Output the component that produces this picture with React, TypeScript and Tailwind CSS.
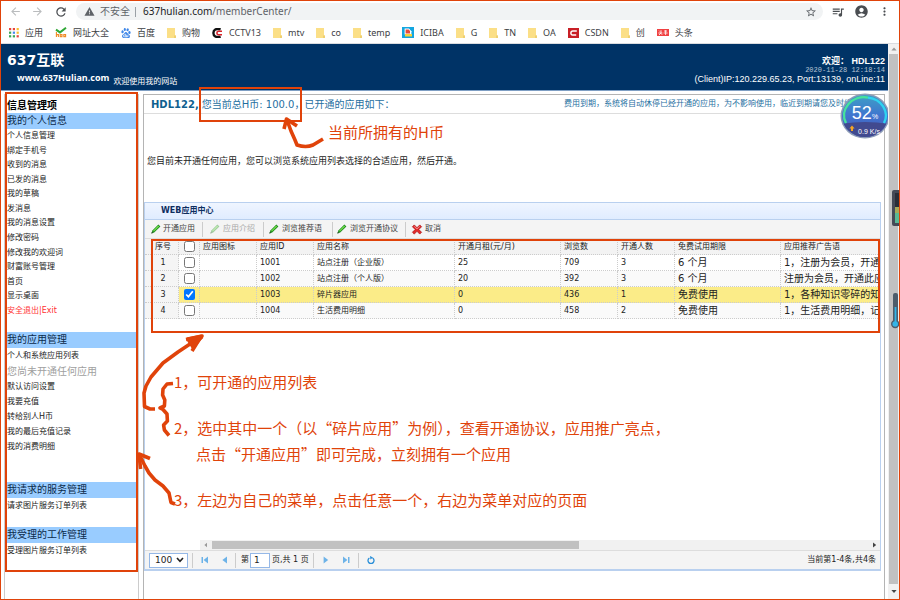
import clsx from 'clsx';
import React, { useState } from 'react';
import {
    MdAccountCircle,
    MdArrowBack,
    MdArrowForward,
    MdMoreVert,
    MdQueueMusic,
    MdRefresh,
    MdStarBorder,
    MdWarning
} from 'react-icons/md';
import { SiBaidu } from 'react-icons/si';

interface AppRow {
    id: string;
    name: string;
    rent: string;
    views: string;
    users: string;
    trial: string;
    slogan: string;
}

const ROWS: AppRow[] = [
    {
        id: '1001',
        name: '站点注册（企业版）',
        rent: '25',
        views: '709',
        users: '3',
        trial: '6 个月',
        slogan: '1，注册为会员，开通'
    },
    {
        id: '1002',
        name: '站点注册（个人版）',
        rent: '20',
        views: '392',
        users: '3',
        trial: '6 个月',
        slogan: '注册为会员，开通此应'
    },
    {
        id: '1003',
        name: '碎片器应用',
        rent: '0',
        views: '436',
        users: '1',
        trial: '免费使用',
        slogan: '1，各种知识零碎的知'
    },
    {
        id: '1004',
        name: '生活费用明细',
        rent: '0',
        views: '458',
        users: '2',
        trial: '免费使用',
        slogan: '1，生活费用明细，记'
    }
];

const PERSONAL = [
    '个人信息管理',
    '绑定手机号',
    '收到的消息',
    '已发的消息',
    '我的草稿',
    '发消息',
    '我的消息设置',
    '修改密码',
    '修改我的欢迎词',
    '财富账号管理',
    '首页',
    '显示桌面'
];

const APP_MENU = [
    '默认访问设置',
    '我要充值',
    '转给别人H币',
    '我的最后充值记录',
    '我的消费明细'
];

const AppsIcon = () => (
    <svg viewBox="0 0 10 10" className="h-[10px] w-[10px]">
        {['#e8453c', '#e8453c', '#f9bb2d', '#3aa757', '#4688f1', '#f9bb2d', '#3aa757', '#3aa757', '#e8453c'].map(
            (fill, i) => (
                <rect
                    key={i}
                    x={(i % 3) * 3.8}
                    y={Math.floor(i / 3) * 3.6}
                    width="2.2"
                    height="2.2"
                    fill={fill}
                />
            )
        )}
    </svg>
);

const HaoIcon = () => (
    <svg viewBox="0 0 12 11" className="h-[11px] w-[12px]" fill="none">
        <path d="M1 2.6 L5 5.4 L11 0.8" stroke="#2fa836" strokeWidth="2" />
        <path
            d="M1.4 5 V10 M1.4 7.6 H3.4 V10 M5.2 7.6 H7 V9.6 H5.2 Z M8.8 7.6 H10.6 V9.6 H8.8 Z"
            stroke="#f08a24"
            strokeWidth="1.1"
        />
    </svg>
);

const FolderIcon = () => (
    <svg viewBox="0 0 9 10" className="h-[10px] w-[9px]">
        <path d="M0 0 H8 V7 L9 8 V10 H0 Z" fill="#fbdf87" />
        <path d="M7 7.6 H9 V10 H7 Z" fill="#efd070" />
    </svg>
);

const CctvIcon = () => (
    <svg viewBox="0 0 11 10" className="h-[10px] w-[11px]" fill="none">
        <path d="M8.6 1.4 C4 0 1.4 2 1.4 5 C1.4 8 4 10 8.6 8.6" stroke="#111" strokeWidth="2.4" />
        <path d="M10 3.2 H6.4 C4.4 3.6 4.4 6.4 6.4 6.8 H10" stroke="#d8232a" strokeWidth="1.6" />
    </svg>
);

const IcibaIcon = () => (
    <svg viewBox="0 0 12 11" className="h-[11px] w-[12px]">
        <rect width="12" height="11" fill="#14a6e0" />
        <path d="M2.6 1.4 H7 L9.4 4.2 V7.4 H2.6 Z" fill="#fff" />
        <path d="M3.6 2.4 H6.6 L8 4 V6.4 H3.6 Z" fill="#e84b3c" />
        <path d="M3 7 H10 V9.5 H3 Z" fill="#f9d23c" />
    </svg>
);

const CsdnIcon = () => (
    <svg viewBox="0 0 11 10" className="h-[10px] w-[11px]" fill="none">
        <rect width="11" height="10" fill="#c81f26" />
        <path d="M8.8 3 H4.8 C2.4 3 2.2 7 4.6 7 H8.2" stroke="#fff" strokeWidth="1.5" />
    </svg>
);

const ToutiaoIcon = () => (
    <svg viewBox="0 0 12 7" className="h-[7px] w-[12px]">
        <rect width="12" height="7" fill="#f04142" />
        <path
            d="M1.4 4 H5.4 M2 1.6 L3 2.6 M4 1.2 V4 L2 6 M4 4.4 L5.2 5.8 M7 2 H10 M6.6 4 H10.6 M8.6 1.2 V6"
            stroke="#fff"
            strokeWidth="0.8"
            fill="none"
        />
    </svg>
);

const PencilIcon = ({ faded }: { faded?: boolean }) => (
    <svg viewBox="0 0 10 10" className={clsx('h-[10px] w-[10px]', faded && 'opacity-40')}>
        <path d="M7.4 0.6 L9.4 2.6 L3.2 8.6 L0.4 9.6 L1.4 6.6 Z" fill="#1f8a1f" />
        <path d="M7.2 1.6 L8.2 2.6 L3 7.6 L2 6.8 Z" fill="#6fdc4a" />
        <path d="M0.4 9.6 L0.8 8 L2 9.1 Z" fill="#333" />
    </svg>
);

const CancelIcon = () => (
    <svg viewBox="0 0 12 12" className="h-[11px] w-[12px]">
        <path
            d="M1 3 L3 1 L6 4 L9 1 L11 3 L8 6 L11 9 L9 11 L6 8 L3 11 L1 9 L4 6 Z"
            fill="#e22b2b"
            stroke="#a81212"
            strokeWidth="0.8"
        />
        <path d="M3 2.6 L6 5.4 L9 2.6" stroke="#ff9b9b" strokeWidth="0.8" fill="none" />
    </svg>
);

const BOOKMARKS = [
    { label: '应用', icon: <AppsIcon /> },
    { label: '网址大全', icon: <HaoIcon /> },
    { label: '百度', icon: <SiBaidu className="h-[10px] w-[10px] text-[#3d86e8]" /> },
    { label: '购物', icon: <FolderIcon /> },
    { label: 'CCTV13', icon: <CctvIcon /> },
    { label: 'mtv', icon: <FolderIcon /> },
    { label: 'co', icon: <FolderIcon /> },
    { label: 'temp', icon: <FolderIcon /> },
    { label: 'ICIBA', icon: <IcibaIcon /> },
    { label: 'G', icon: <FolderIcon /> },
    { label: 'TN', icon: <FolderIcon /> },
    { label: 'OA', icon: <FolderIcon /> },
    { label: 'CSDN', icon: <CsdnIcon /> },
    { label: '创', icon: <FolderIcon /> },
    { label: '头条', icon: <ToutiaoIcon /> }
];

const BrowserBar = () => (
    <div className="border-b border-[#dadce0] bg-white font-['Noto_Sans','Noto_Sans_CJK_SC',sans-serif]">
        <div className="flex h-[21px] items-center pr-2 pl-2">
            <button aria-label="后退" className="w-[22px] text-[#babcbe]">
                <MdArrowBack className="h-[13px] w-[13px]" />
            </button>
            <button aria-label="前进" className="w-[23px] text-[#babcbe]">
                <MdArrowForward className="h-[13px] w-[13px]" />
            </button>
            <button aria-label="刷新" className="w-[22px] text-[#4a4d51]">
                <MdRefresh className="h-[14px] w-[14px]" />
            </button>
            <div className="flex h-[17px] flex-1 items-center rounded-full bg-[#f1f3f4] pr-[6px] pl-2 text-[10px] text-[#5f6368]">
                <MdWarning className="h-[11px] w-[11px]" />
                <span className="ml-[5px]">不安全</span>
                <span className="mr-[7px] ml-[5px] h-[10px] w-px bg-[#9aa0a6]" />
                <span className="flex-1">
                    <span className="text-[#202124]">637hulian.com</span>
                    /memberCenter/
                </span>
                <button aria-label="收藏">
                    <MdStarBorder className="h-[12px] w-[12px]" />
                </button>
            </div>
            <div className="flex items-center gap-[9px] pl-2 text-[#4a4d51]">
                <MdQueueMusic className="h-[14px] w-[14px]" />
                <MdAccountCircle className="h-[15px] w-[15px]" />
                <MdMoreVert className="h-[13px] w-[13px]" />
            </div>
        </div>
        <nav className="flex h-[21px] items-center gap-3 overflow-hidden pl-2 text-[9px] text-[#3c4043]">
            {BOOKMARKS.map((b) => (
                <a key={b.label} href="#" className="flex shrink-0 items-center gap-[6px]">
                    {b.icon}
                    {b.label}
                </a>
            ))}
        </nav>
    </div>
);

const SiteHeader = () => (
    <header className="flex h-[47px] justify-between border-b border-[#7f9fc4] bg-[#003366] pr-[3px] pl-[6px] text-white">
        <div className="flex flex-col pt-[6px]">
            <h1 className="text-[14px] leading-5 font-bold">637互联</h1>
            <div className="flex items-start gap-1 pl-[10px]">
                <span className="font-['Open_Sans',sans-serif] text-[9px] leading-4 font-bold">
                    www.637Hulian.com
                </span>
                <span className="pt-1 text-[8px] leading-4">欢迎使用我的网站</span>
            </div>
        </div>
        <div className="pt-[13px] text-right font-['Liberation_Sans','Noto_Sans_CJK_SC',sans-serif] text-[9px] leading-[9px]">
            <p className="font-bold">欢迎： HDL122</p>
            <p className="font-['Liberation_Mono',monospace] text-[7px] text-[#b8c4d4]">
                2020-11-28 12:18:14
            </p>
            <p>(Client)IP:120.229.65.23, Port:13139, onLine:11</p>
        </div>
    </header>
);

const MenuTitle = ({ children }: { children: React.ReactNode }) => (
    <h2 className="bg-[#99ccff] pl-[2px] text-[10px] leading-4 text-[#0b2a4a]">{children}</h2>
);

const MenuLink = ({ children }: { children: React.ReactNode }) => (
    <a href="#" className="flex h-full items-center pl-[2px] leading-[14px]">
        {children}
    </a>
);

const Sidebar = () => (
    <aside className="relative ml-[3px] flex w-[135px] shrink-0 flex-col border-x border-[#cccccc] bg-white pt-1 text-[8px] text-[#222222]">
        <p className="pl-[2px] text-[10px] leading-[15px] font-bold text-black">信息管理项</p>
        <MenuTitle>我的个人信息</MenuTitle>
        <ul className="grid h-[189px] auto-rows-fr">
            {PERSONAL.map((item) => (
                <li key={item}>
                    <MenuLink>{item}</MenuLink>
                </li>
            ))}
            <li className="text-[#ff3333]">
                <MenuLink>安全退出|Exit</MenuLink>
            </li>
        </ul>
        <div className="mt-[14px]">
            <MenuTitle>我的应用管理</MenuTitle>
            <div className="h-4">
                <MenuLink>个人和系统应用列表</MenuLink>
            </div>
            <p className="pl-[2px] text-[10px] leading-4 text-[#a0a0a0]">您尚未开通任何应用</p>
            <ul className="grid h-[74px] auto-rows-fr">
                {APP_MENU.map((item) => (
                    <li key={item}>
                        <MenuLink>{item}</MenuLink>
                    </li>
                ))}
            </ul>
        </div>
        <div className="mt-7">
            <MenuTitle>我请求的服务管理</MenuTitle>
            <div className="h-4">
                <MenuLink>请求图片服务订单列表</MenuLink>
            </div>
        </div>
        <div className="mt-[13px]">
            <MenuTitle>我受理的工作管理</MenuTitle>
            <div className="h-4">
                <MenuLink>受理图片服务订单列表</MenuLink>
            </div>
        </div>
        <div className="absolute -top-[2px] right-0 bottom-[27px] left-0 border-2 border-[#e0430a]" />
    </aside>
);

const Separator = () => <span className="h-[15px] w-px bg-[#cccccc]" />;

const Toolbar = () => (
    <div className="flex h-[19px] items-center border-b border-[#dddddd] bg-[#f4f4f4] pl-[6px] text-[8px] text-[#444444]">
        <button className="flex w-[51px] items-center gap-[2px]">
            <PencilIcon />
            开通应用
        </button>
        <Separator />
        <button disabled className="ml-[7px] flex w-[53px] items-center gap-[3px] text-[#a8a8a8]">
            <PencilIcon faded />
            应用介绍
        </button>
        <Separator />
        <button className="ml-[5px] flex w-[63px] items-center gap-[3px]">
            <PencilIcon />
            浏览推荐语
        </button>
        <Separator />
        <button className="ml-1 flex w-[68px] items-center gap-[3px]">
            <PencilIcon />
            浏览开通协议
        </button>
        <Separator />
        <button className="ml-[5px] flex items-center gap-[2px]">
            <CancelIcon />
            取消
        </button>
    </div>
);

const CELL =
    'h-4 overflow-hidden border-r border-b border-dotted border-[#cccccc] pl-[3px] font-normal whitespace-nowrap';

const AppTable = () => {
    const [checked, setChecked] = useState<string[]>(['1003']);

    const toggle = (id: string) => {
        setChecked((prev) =>
            prev.includes(id) ? prev.filter((c) => c !== id) : [...prev, id]
        );
    };

    return (
        <table className="w-full table-fixed border-separate border-spacing-0 text-left text-[8px] leading-[15px] text-[#222222]">
            <colgroup>
                <col className="w-[34px]" />
                <col className="w-[21px]" />
                <col className="w-[57px]" />
                <col className="w-[57px]" />
                <col className="w-[141px]" />
                <col className="w-[106px]" />
                <col className="w-[57px]" />
                <col className="w-[57px]" />
                <col className="w-[106px]" />
                <col />
            </colgroup>
            <thead className="bg-[#f3f3f3]">
                <tr>
                    <th className={clsx(CELL, 'text-center')}>序号</th>
                    <th className={CELL}>
                        <input
                            type="checkbox"
                            aria-label="全选"
                            className="ml-[2px] block h-[11px] w-[11px]"
                            checked={checked.length === ROWS.length}
                            onChange={(e) => {
                                setChecked(e.target.checked ? ROWS.map((r) => r.id) : []);
                            }}
                        />
                    </th>
                    <th className={CELL}>应用图标</th>
                    <th className={CELL}>应用ID</th>
                    <th className={CELL}>应用名称</th>
                    <th className={CELL}>开通月租(元/月)</th>
                    <th className={CELL}>浏览数</th>
                    <th className={CELL}>开通人数</th>
                    <th className={CELL}>免费试用期限</th>
                    <th className={CELL}>应用推荐广告语</th>
                </tr>
            </thead>
            <tbody>
                {ROWS.map((row, i) => (
                    <tr
                        key={row.id}
                        className={clsx(
                            checked.includes(row.id) && 'bg-[#fbec88]',
                            !checked.includes(row.id) && i % 2 === 1 && 'bg-[#fafafa]'
                        )}
                    >
                        <td className={clsx(CELL, 'bg-[#f5f5f5] text-center')}>{i + 1}</td>
                        <td className={CELL}>
                            <input
                                type="checkbox"
                                aria-label={row.name}
                                className="ml-[2px] block h-[11px] w-[11px]"
                                checked={checked.includes(row.id)}
                                onChange={() => {
                                    toggle(row.id);
                                }}
                            />
                        </td>
                        <td className={CELL} />
                        <td className={CELL}>{row.id}</td>
                        <td className={CELL}>{row.name}</td>
                        <td className={CELL}>{row.rent}</td>
                        <td className={CELL}>{row.views}</td>
                        <td className={CELL}>{row.users}</td>
                        <td className={clsx(CELL, 'text-[10px]')}>{row.trial}</td>
                        <td className={clsx(CELL, 'text-[10px]')}>{row.slogan}</td>
                    </tr>
                ))}
            </tbody>
        </table>
    );
};

const Pager = () => (
    <div className="flex h-[19px] items-center border-t border-[#dddddd] bg-[#f4f4f4] pr-1 pl-1 text-[8px] text-[#222222]">
        <div className="relative">
            <select
                aria-label="每页条数"
                className="block h-[15px] w-[39px] appearance-none border border-[#95b8e7] bg-white pl-[5px] text-[9px] leading-[13px]"
            >
                <option>100</option>
            </select>
            <svg
                viewBox="0 0 8 6"
                className="pointer-events-none absolute top-1 right-1 h-[6px] w-[8px]"
                fill="none"
            >
                <path d="M1 1 L4 4.4 L7 1" stroke="#222" strokeWidth="1.6" />
            </svg>
        </div>
        <div className="flex items-center gap-2 pl-1 text-[#6db3e8]">
            <Separator />
            <button aria-label="首页" className="w-3">
                <svg viewBox="0 0 8 8" className="h-[8px] w-[8px]" fill="currentColor">
                    <path d="M0.5 1 H2 V7 H0.5 Z M7 0.6 V7.4 L2.6 4 Z" />
                </svg>
            </button>
            <button aria-label="上一页" className="w-[6px]">
                <svg viewBox="0 0 8 8" className="h-[8px] w-[8px]" fill="currentColor">
                    <path d="M6 0.6 V7.4 L1.4 4 Z" />
                </svg>
            </button>
            <Separator />
        </div>
        <label className="flex items-center gap-px pl-[5px]">
            第
            <input
                defaultValue="1"
                className="h-[15px] w-5 border border-[#95b8e7] bg-white pl-[3px] text-[9px]"
            />
            <span className="pl-px">页,共 1 页</span>
        </label>
        <div className="flex items-center gap-2 pl-1 text-[#6db3e8]">
            <Separator />
            <button aria-label="下一页" className="w-3">
                <svg viewBox="0 0 8 8" className="h-[8px] w-[8px]" fill="currentColor">
                    <path d="M1.6 0.6 V7.4 L6.2 4 Z" />
                </svg>
            </button>
            <button aria-label="末页" className="w-[8px]">
                <svg viewBox="0 0 8 8" className="h-[8px] w-[8px]" fill="currentColor">
                    <path d="M6 1 H7.5 V7 H6 Z M1 0.6 V7.4 L5.4 4 Z" />
                </svg>
            </button>
            <Separator />
            <button aria-label="重新加载">
                <svg viewBox="0 0 8 8" className="h-[8px] w-[8px]" fill="none">
                    <path d="M2.4 2 A3 3 0 1 0 5.6 2" stroke="#2a8fd8" strokeWidth="1.3" />
                    <path d="M3 0 L6 1.6 L3.4 3.4 Z" fill="#2a8fd8" />
                </svg>
            </button>
        </div>
        <span className="ml-auto">当前第1-4条,共4条</span>
    </div>
);

const AppCenter = () => (
    <section className="relative mr-[3px] mb-7 flex flex-1 flex-col border border-b-2 border-[#b9d0ef] bg-white">
        <h2 className="h-[17px] border-b border-[#b9d0ef] bg-gradient-to-b from-[#eff5ff] to-[#e0ecff] pl-4 text-[8px] leading-4 font-bold text-[#0e2d5f]">
            WEB应用中心
        </h2>
        <Toolbar />
        <AppTable />
        <div className="mt-auto ml-[55px] flex h-[10px] items-center bg-[#f1f1f1]">
            <svg viewBox="0 0 12 8" className="h-[8px] w-[12px]">
                <path d="M7 1.8 V6.2 L4.4 4 Z" fill="#999" />
            </svg>
            <div className="h-2 w-[54%] bg-[#c1c1c1]" />
            <svg viewBox="0 0 12 8" className="ml-auto h-[8px] w-[12px]">
                <path d="M5 1.4 V6.6 L8.2 4 Z" fill="#444" />
            </svg>
        </div>
        <Pager />
        <div className="absolute top-[36px] right-0 left-[6px] h-[94px] border-2 border-[#e0430a]" />
    </section>
);

const PageScrollbar = () => (
    <div className="relative flex w-[11px] shrink-0 flex-col items-center bg-[#f1f1f1]">
        <svg viewBox="0 0 10 10" className="h-[10px] w-[10px]">
            <path d="M2.4 6.4 L5 3.6 L7.6 6.4 Z" fill="#999" />
        </svg>
        <div className="w-[9px] flex-1 bg-[#c1c1c1]" />
        <svg viewBox="0 0 10 10" className="mb-px h-[14px] w-[10px]">
            <path d="M2.4 4 L5 7 L7.6 4 Z" fill="#444" />
        </svg>
        {/* desktop gauges docked to the window edge */}
        <svg viewBox="0 0 8 40" className="absolute top-[145px] right-0 h-[40px] w-[8px]">
            <rect x="1" y="1" width="9" height="36" rx="2" fill="#454a57" />
            <rect x="4" y="4" width="4" height="30" fill="#2a2e38" />
            <path d="M4 18 H8 V34 H4 Z" fill="#5bb894" />
            <path d="M4 18 H8 V24 H4 Z" fill="#a5a95a" />
        </svg>
        <svg viewBox="0 0 9 36" className="absolute top-[249px] right-0 h-[36px] w-[9px]">
            <rect x="3" y="0" width="5" height="30" rx="2" fill="#4d5d6b" />
            <circle cx="5.2" cy="31" r="4.2" fill="#4d5d6b" />
            <circle cx="5.2" cy="31" r="2.8" fill="#35b5e6" />
            <rect x="4.6" y="14" width="1.8" height="16" fill="#35b5e6" />
        </svg>
    </div>
);

const SpeedBall = () => (
    <div className="absolute -top-[2px] -right-[6px] flex h-[46px] w-[50px] flex-col items-center text-white">
        <svg viewBox="0 0 50 46" className="absolute inset-0 h-[46px] w-[50px]">
            <defs>
                <linearGradient id="ball" x1="0" y1="0" x2="0" y2="1">
                    <stop offset="0" stopColor="#3f9fc6" />
                    <stop offset="0.5" stopColor="#3f74cf" />
                    <stop offset="1" stopColor="#4a55b0" />
                </linearGradient>
                <clipPath id="ball-clip">
                    <ellipse cx="25" cy="23" rx="23" ry="21" />
                </clipPath>
            </defs>
            <ellipse cx="25" cy="23" rx="24.5" ry="22.5" fill="#8d9cb8" />
            <ellipse cx="25" cy="23" rx="23" ry="21" fill="url(#ball)" />
            <path d="M0 31 Q25 27 50 31 V46 H0 Z" fill="#414a8f" clipPath="url(#ball-clip)" />
            <path d="M6 30 A20 18 0 0 1 28 4.6" fill="none" stroke="#46e39c" strokeWidth="2.4" />
            <path d="M28 4.6 A20 18 0 0 1 44 30" fill="none" stroke="#2fd3f0" strokeWidth="2.4" />
            <path d="M11 38 V35.5 H9.4 L12 32.6 L14.6 35.5 H13 V38 Z" fill="#f5a623" />
        </svg>
        <span className="relative pt-[11px] font-['Liberation_Sans',sans-serif] text-[18px] leading-[18px]">
            52<span className="text-[7px]">%</span>
        </span>
        <span className="relative pt-[2px] pl-2 font-['Liberation_Sans',sans-serif] text-[7px] leading-[8px]">
            0.9 K/s
        </span>
    </div>
);

const MainPanel = () => (
    <main className="relative mr-[3px] ml-1 flex min-w-0 flex-1 flex-col border-x border-t border-[#b4b4b4] bg-white">
        <div className="flex h-[19px] items-center justify-between border-b border-[#dddddd] pl-[7px] text-[10px] text-[#1f6f9f]">
            <p className="whitespace-nowrap">
                <b className="mr-[3px] text-[#0f5f8f]">HDL122,</b>
                您当前总H币: 100.0，已开通的应用如下：
            </p>
            <p className="w-[320px] text-[8px] whitespace-nowrap">
                费用到期，系统将自动休停已经开通的应用，为不影响使用，临近到期请您及时续费
            </p>
        </div>
        <p className="h-[88px] pt-[39px] pl-[3px] text-[9px] leading-4 text-[#222222]">
            您目前未开通任何应用，您可以浏览系统应用列表选择的合适应用，然后开通。
        </p>
        <AppCenter />
        <SpeedBall />
    </main>
);

// Hand drawn guide: marker strokes and the notes that explain them
const Annotations = () => (
    <div className="pointer-events-none absolute inset-0 font-['Noto_Sans_CJK_SC',sans-serif] text-[15px] leading-[26px] whitespace-nowrap text-[#e0430a]">
        <div className="absolute top-[86px] left-[198px] h-[35px] w-[103px] border-2 border-[#e0430a]" />
        <svg
            viewBox="1 1 900 600"
            className="absolute top-0 left-0 h-[600px] w-[900px]"
            fill="none"
            stroke="#e0430a"
            strokeWidth="3.6"
            strokeLinejoin="round"
        >
            <path d="M287 120 L291 131 L295 140 L297 145 Q306 148 313 145 L323 139" />
            <path d="M284 129 L286.5 119 L297 126" />
            <path d="M155 409 L150 409 L144.5 406.5 L144 393 L146 386 L151 377 L163 363 L178 352 L190 344 L202 337" />
            <path d="M186 339.5 L201 336.5 L192 351" />
            <path d="M188 339 L202 336 L193 347 Z" fill="#e0430a" />
            <path d="M173 383.5 L167 384 L163 389 L162.6 395 L164.8 400 L164.4 406 L160 408 L163 409.5 L167 414 L167.4 421 L163.6 425 L164.4 430 L169 435.5" />
            <path d="M175 504 L171 502.5 L169 493 L163 486 L155 480 L149 473 L145 466 L139 454" />
            <path d="M140.6 469 L139 454 L150 458.5" />
        </svg>
        <p className="absolute top-[118px] left-[327px]">当前所拥有的H币</p>
        <div className="absolute top-[368px] left-[173px] flex flex-col">
            <p>1，可开通的应用列表</p>
            <p className="mt-5">
                2，选中其中一个（以“碎片应用”为例），查看开通协议，应用推广亮点，
            </p>
            <p className="pl-[22px]">点击“开通应用”即可完成，立刻拥有一个应用</p>
            <p className="mt-5">3，左边为自己的菜单，点击任意一个，右边为菜单对应的页面</p>
        </div>
    </div>
);

export default function App() {
    return (
        <div
            lang="zh-CN"
            className="relative flex min-h-screen flex-col overflow-hidden border border-[#e0430a] bg-white font-['DejaVu_Sans','Noto_Sans_CJK_SC',sans-serif]"
        >
            <BrowserBar />
            <div className="flex flex-1">
                <div className="flex min-w-0 flex-1 flex-col">
                    <SiteHeader />
                    <div className="flex flex-1 pt-[3px]">
                        <Sidebar />
                        <MainPanel />
                    </div>
                </div>
                <PageScrollbar />
            </div>
            <Annotations />
        </div>
    );
}
